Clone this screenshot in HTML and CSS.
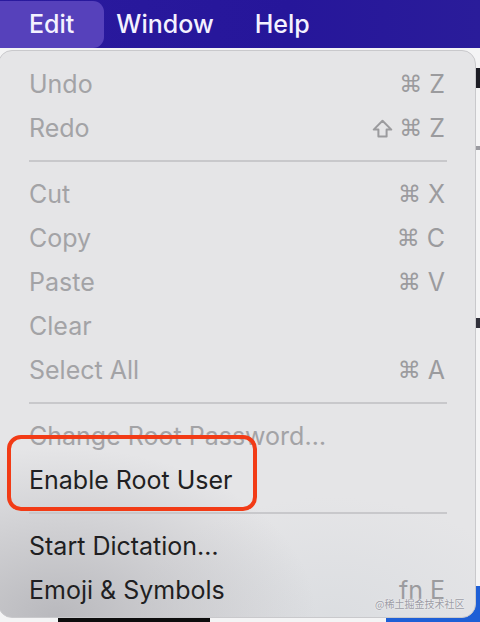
FILE: index.html
```html
<!DOCTYPE html>
<html lang="en">
<head>
<meta charset="utf-8">
<title>Edit menu</title>
<link rel="stylesheet" href="styles.css">
</head>
<body>
<div class="screen">
  <div class="backdrop">
    <span class="bd-mark bd-mark-1"></span>
    <span class="bd-mark bd-mark-2"></span>
    <span class="bd-mark bd-mark-3"></span>
    <span class="bd-black"></span>
    <span class="bd-blue"></span>
  </div>

  <nav class="menubar">
    <span class="mb-item mb-edit">Edit</span>
    <span class="mb-item mb-window">Window</span>
    <span class="mb-item mb-help">Help</span>
  </nav>

  <div class="panel">
    <div class="row disabled"><span class="label">Undo</span><span class="keys"><span class="sym">⌘</span><span class="k">Z</span></span></div>
    <div class="row disabled"><span class="label">Redo</span><span class="keys"><svg class="shift" width="21" height="19" viewBox="0 0 21 19" aria-label="shift"><path d="M10.5 1.8 L19.3 10.6 H14.6 V17.4 H6.4 V10.6 H1.7 Z" fill="none" stroke="#9b9b9e" stroke-width="2" stroke-linejoin="round"/></svg><span class="sym">⌘</span><span class="k">Z</span></span></div>
    <div class="sep"></div>
    <div class="row disabled"><span class="label">Cut</span><span class="keys"><span class="sym">⌘</span><span class="k">X</span></span></div>
    <div class="row disabled"><span class="label">Copy</span><span class="keys"><span class="sym">⌘</span><span class="k">C</span></span></div>
    <div class="row disabled"><span class="label">Paste</span><span class="keys"><span class="sym">⌘</span><span class="k">V</span></span></div>
    <div class="row disabled"><span class="label">Clear</span></div>
    <div class="row disabled"><span class="label">Select All</span><span class="keys"><span class="sym">⌘</span><span class="k">A</span></span></div>
    <div class="sep"></div>
    <div class="row disabled"><span class="label">Change Root Password…</span></div>
    <div class="row"><span class="label">Enable Root User</span></div>
    <div class="sep"></div>
    <div class="row"><span class="label">Start Dictation…</span></div>
    <div class="row"><span class="label">Emoji &amp; Symbols</span><span class="keys"><span class="k">fn</span><span class="k">E</span></span></div>

    <div class="highlight"></div>
    <div class="watermark">@稀土掘金技术社区</div>
  </div>
</div>
</body>
</html>
```

FILE: styles.css
```css
* { box-sizing: border-box; }

html, body {
  margin: 0;
  padding: 0;
  width: 480px;
  height: 622px;
  overflow: hidden;
  background: #f2f2f3;
  font-family: "Inter", "Liberation Sans", sans-serif;
}

.screen {
  position: relative;
  width: 480px;
  height: 622px;
  overflow: hidden;
}

/* things behind the menu (free canvas) */
.backdrop {
  position: absolute;
  inset: 0;
  background: #f4f4f5;
}
.bd-mark {
  position: absolute;
  left: 476px;
  width: 6px;
  background: #1c1c24;
}
.bd-mark-1 { top: 68px; height: 20px; }
.bd-mark-2 { top: 146px; height: 4px; background: #9a9aa0; }
.bd-mark-3 { top: 318px; height: 10px; background: #30303a; }
.bd-black {
  position: absolute;
  left: 58px;
  top: 618px;
  width: 152px;
  height: 6px;
  background: #0d0d0d;
}
.bd-blue {
  position: absolute;
  left: 386px;
  top: 586px;
  width: 100px;
  height: 40px;
  background: #1e5fd6;
}

/* menu bar */
.menubar {
  position: relative;
  display: flex;
  align-items: center;
  height: 48px;
  background: linear-gradient(90deg, #2a1a9e 0%, #26169a 60%, #2a1c9a 100%);
}
.mb-item {
  color: #f4f2ff;
  font-size: 25px;
  font-weight: 500;
  line-height: 47px;
}
.mb-edit {
  padding: 0 30px 0 29px;
  height: 47px;
  background: #5641bb;
  border-radius: 0 11px 11px 0;
}
.mb-window { margin-left: 12px; }
.mb-help { margin-left: 41px; }

/* the menu panel */
.panel {
  position: relative;
  margin: 2px 0 0 -2px;
  width: 478px;
  height: 568px;
  padding: 11px 0 7px 0;
  border: 1px solid #c9c9cc;
  border-radius: 14px;
  background:
    radial-gradient(ellipse 260px 170px at 12% 100%, rgba(170,170,175,0.75), rgba(200,200,205,0) 100%),
    radial-gradient(ellipse 200px 120px at 70% 100%, rgba(215,218,222,0.7), rgba(215,218,222,0) 100%),
    #e5e5e7;
}

.row {
  display: flex;
  align-items: center;
  justify-content: space-between;
  height: 44px;
  padding: 0 30px 0 30px;
  font-size: 25px;
  color: #1f1f22;
}
.row.disabled { color: #a3a3a6; }

.keys {
  display: flex;
  align-items: center;
  gap: 7px;
  color: #9b9b9e;
}
.sym {
  font-family: "DejaVu Sans", sans-serif;
  font-size: 23px;
  line-height: 1;
}
.shift { display: block; margin-right: -1px; }
.k { font-size: 25px; }

.sep {
  height: 2px;
  margin: 10px 28px 10px 30px;
  background: #c8c8cb;
}

/* annotation overlay */
.highlight {
  position: absolute;
  left: 8px;
  top: 384px;
  width: 250px;
  height: 76px;
  border: 4px solid #f23b16;
  border-radius: 14px;
}

.watermark {
  position: absolute;
  left: 376px;
  top: 546px;
  font-family: "Noto Sans CJK SC", sans-serif;
  font-size: 10px;
  line-height: 14px;
  color: rgba(140,140,150,0.85);
  text-shadow: 0 0 2px rgba(255,255,255,0.9);
  white-space: nowrap;
}
```
